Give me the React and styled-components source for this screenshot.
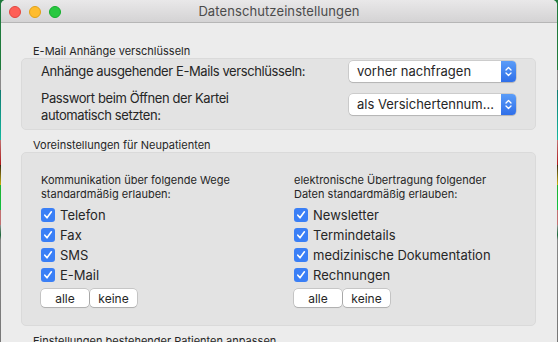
import React from 'react'
import styled, { createGlobalStyle } from 'styled-components'

const GlobalStyle = createGlobalStyle`
  html, body {
    margin: 0;
    padding: 0;
    height: 342px;
    overflow: hidden;
    background: linear-gradient(
      to bottom,
      #1f7a3c 0px, #1f7a3c 70px,
      #8a8a8a 70px, #8a8a8a 90px,
      #0f7a70 90px, #12b8a0 140px,
      #c07070 140px, #b01818 165px,
      #3a2a10 165px, #c8b010 185px,
      #20b030 185px, #10c040 210px,
      #c07070 210px, #c07070 225px,
      #909090 225px, #1a6a3a 235px,
      #888 240px, #777 342px
    );
    font-family: Inter, "Liberation Sans", sans-serif;
  }
`

const Window = styled.div`
  margin: 0 1px;
  height: 342px;
  background: #ececec;
  border-radius: 5px 5px 0 0;
  overflow: hidden;
  display: flex;
  flex-direction: column;
`

const TitleBar = styled.div`
  position: relative;
  height: 22px;
  flex-shrink: 0;
  display: flex;
  align-items: center;
  justify-content: center;
  background: linear-gradient(to bottom, #e9e8e9, #d4d3d4);
  border-bottom: 1px solid #b6b6b6;
`

const Lights = styled.div`
  position: absolute;
  left: 8px;
  top: 6px;
  display: flex;
  gap: 8px;
`

const Light = styled.span`
  width: 12px;
  height: 12px;
  border-radius: 50%;
  box-sizing: border-box;
  background: ${p => p.color};
  border: 0.5px solid ${p => p.edge};
`

const Title = styled.div`
  font-size: 13px;
  color: #4b4b4b;
  letter-spacing: 0.1px;
`

const Content = styled.div`
  padding: 0 21px 0 20px;
  display: flex;
  flex-direction: column;
`

const SectionLabel = styled.div`
  font-size: 11px;
  line-height: 13px;
  color: #262626;
  padding-left: 12px;
  margin-top: ${p => p.top || 9}px;
`

const Box = styled.div`
  background: #e3e3e3;
  border: 1px solid #dadada;
  border-radius: 5px;
  padding: ${p => p.pad};
`

const Row = styled.div`
  display: flex;
  justify-content: space-between;
  align-items: ${p => (p.top ? 'flex-start' : 'center')};
  margin-top: ${p => p.gap || 0}px;
`

const FieldLabel = styled.div`
  font-size: 13px;
  line-height: 17px;
  letter-spacing: -0.4px;
  color: #262626;
`

const Popup = styled.div`
  width: 167px;
  height: 21px;
  box-sizing: border-box;
  margin-top: ${p => p.offset || 0}px;
  display: flex;
  align-items: stretch;
  background: #fff;
  border-radius: 4px;
  box-shadow: 0 0 0 0.5px rgba(0, 0, 0, 0.2), 0 1px 1px rgba(0, 0, 0, 0.12);
  overflow: hidden;
`

const PopupText = styled.div`
  flex: 1;
  padding-left: 8px;
  font-size: 13px;
  line-height: 21px;
  color: #262626;
  white-space: nowrap;
`

const Stepper = styled.div`
  width: 15px;
  display: flex;
  align-items: center;
  justify-content: center;
  background: linear-gradient(to bottom, #5a9cf8, #2f6fe9);
`

const Columns = styled.div`
  display: grid;
  grid-template-columns: 253px 1fr;
`

const Column = styled.div`
  display: flex;
  flex-direction: column;
`

const Hint = styled.div`
  font-size: 11px;
  line-height: 14px;
  color: #262626;
  margin-bottom: 4px;
`

const CheckRow = styled.label`
  display: flex;
  align-items: center;
  gap: 5px;
  height: 20px;
  font-size: 13px;
  color: #262626;
`

const Check = styled.span`
  width: 14px;
  height: 14px;
  border-radius: 3px;
  background: #3a7ff6;
  display: flex;
  align-items: center;
  justify-content: center;
`

const ButtonGroup = styled.div`
  display: flex;
  gap: 1px;
  margin-top: 4px;
`

const Button = styled.button`
  width: ${p => p.w}px;
  height: 18px;
  padding: 0;
  background: #fff;
  border: none;
  border-radius: 4px;
  box-shadow: 0 0 0 0.5px rgba(0, 0, 0, 0.25), 0 1px 1px rgba(0, 0, 0, 0.12);
  font-family: inherit;
  font-size: 12px;
  color: #262626;
`

const StepIcon = () => (
  <svg width="9" height="13" viewBox="0 0 9 13">
    <path d="M2 5 L4.5 2.5 L7 5 M2 8 L4.5 10.5 L7 8" fill="none" stroke="#fff" strokeWidth="1.3" strokeLinecap="round" strokeLinejoin="round" />
  </svg>
)

const Tick = () => (
  <svg width="10" height="10" viewBox="0 0 10 10">
    <path d="M1.8 5.2 L4 7.8 L8.4 1.8" fill="none" stroke="#fff" strokeWidth="1.6" strokeLinecap="round" strokeLinejoin="round" />
  </svg>
)

const CheckList = ({ hint, items }) => (
  <Column>
    <Hint>{hint[0]}<br />{hint[1]}</Hint>
    {items.map(item => (
      <CheckRow key={item}>
        <Check><Tick /></Check>
        {item}
      </CheckRow>
    ))}
    <ButtonGroup>
      <Button w={48}>alle</Button>
      <Button w={47}>keine</Button>
    </ButtonGroup>
  </Column>
)

export default function App() {
  return (
    <>
      <GlobalStyle />
      <Window>
        <TitleBar>
          <Lights>
            <Light color="#fe5f57" edge="#e2463f" />
            <Light color="#febc2e" edge="#e1a116" />
            <Light color="#28c840" edge="#14ae2c" />
          </Lights>
          <Title>Datenschutzeinstellungen</Title>
        </TitleBar>
        <Content>
          <SectionLabel top={22}>E-Mail Anhänge verschlüsseln</SectionLabel>
          <Box pad="2px 19px 5px 19px">
            <Row>
              <FieldLabel>Anhänge ausgehender E-Mails verschlüsseln:</FieldLabel>
              <Popup>
                <PopupText>vorher nachfragen</PopupText>
                <Stepper><StepIcon /></Stepper>
              </Popup>
            </Row>
            <Row top gap={8}>
              <FieldLabel>Passwort beim Öffnen der Kartei<br />automatisch setzten:</FieldLabel>
              <Popup offset={4}>
                <PopupText>als Versichertennum...</PopupText>
                <Stepper><StepIcon /></Stepper>
              </Popup>
            </Row>
          </Box>
          <SectionLabel>Voreinstellungen für Neupatienten</SectionLabel>
          <Box pad="20px 19px 18px 19px">
            <Columns>
              <CheckList
                hint={['Kommunikation über folgende Wege', 'standardmäßig erlauben:']}
                items={['Telefon', 'Fax', 'SMS', 'E-Mail']}
              />
              <CheckList
                hint={['elektronische Übertragung folgender', 'Daten standardmäßig erlauben:']}
                items={['Newsletter', 'Termindetails', 'medizinische Dokumentation', 'Rechnungen']}
              />
            </Columns>
          </Box>
          <SectionLabel>Einstellungen bestehender Patienten anpassen</SectionLabel>
        </Content>
      </Window>
    </>
  )
}
